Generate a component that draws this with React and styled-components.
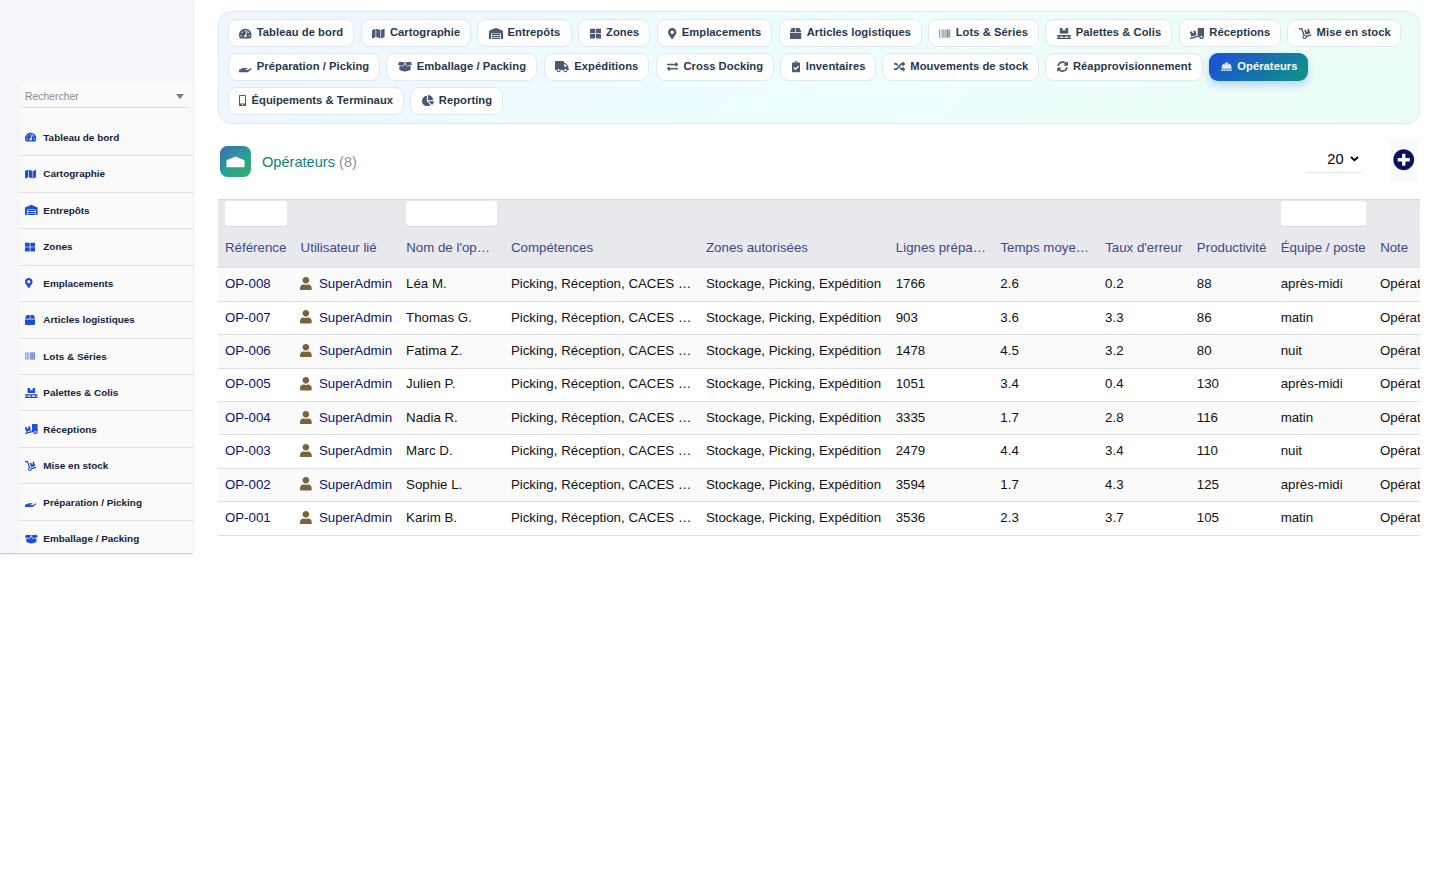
import React from 'react';
import styled, { createGlobalStyle, css } from 'styled-components';
import {
  FaTachometerAlt, FaMap, FaWarehouse, FaThLarge, FaMapMarkerAlt, FaBox, FaBarcode, FaPallet,
  FaTruckLoading, FaDolly, FaHandHolding, FaBoxOpen, FaTruck, FaExchangeAlt, FaClipboardCheck,
  FaRandom, FaSyncAlt, FaHardHat, FaMobileAlt, FaChartPie, FaUser, FaPlusCircle,
} from 'react-icons/fa';

const GlobalStyle = createGlobalStyle`
  * { box-sizing: border-box; }
  body {
    margin: 0;
    background: #fff;
    font-family: "Liberation Sans", Arial, sans-serif;
    overflow: hidden;
  }
`;

const Page = styled.div`
  display: flex;
  align-items: flex-start;
  width: 1445px;
  height: 894px;
`;

const Sidebar = styled.aside`
  width: 193px;
  height: 554px;
  flex: none;
  padding: 83px 0 0 20px;
  overflow: hidden;
  background: #f4f6fb;
  border-bottom: 1.5px solid #cfd0d4;
  box-shadow: 0 0 2px rgba(0, 0, 0, 0.2);
`;

const SideInner = styled.div`
  height: 480px;
  background: #fafafa;
`;

const SearchField = styled.div`
  display: flex;
  align-items: center;
  justify-content: space-between;
  width: 169px;
  height: 25px;
  padding: 2px 5px 0;
  border-bottom: 1px solid #d9d9d9;
  border-radius: 3px;
  color: #8a8a8a;
  font-size: 10.4px;
`;

const Caret = styled.span`
  border: 4px solid transparent;
  border-top: 5px solid #7d7d7d;
  border-bottom: 0;
`;

const SideList = styled.nav`
  padding-top: 11.7px;
`;

const SideItem = styled.a`
  display: flex;
  align-items: center;
  height: 36.48px;
  padding-left: 5px;
  border-bottom: 1px solid #dfdfe1;
  color: #14213b;
  font-size: 9.93px;
  font-weight: 700;
  white-space: nowrap;
`;

const IconBox = styled.span`
  display: flex;
  flex: none;

  svg {
    flex: none;
    width: ${(p) => p.$ratio}em;
    height: 1em;
  }
`;

const SideIcon = styled(IconBox)`
  width: 18.3px;
  color: #1d4ed8;
  font-size: 10.1px;
`;

const Content = styled.main`
  width: 1202px;
  margin-left: 25px;
  padding-top: 11px;
`;

const Tabs = styled.nav`
  display: flex;
  flex-wrap: wrap;
  align-content: flex-start;
  gap: 5.4px 6.3px;
  height: 113px;
  padding: 7px 8.5px 0;
  border: 1px solid #e2e8f0;
  border-radius: 13px;
  background: linear-gradient(135deg, #eff6ff 0%, #ecfeff 50%, #ecfdf5 100%);
`;

const Tab = styled.a`
  display: flex;
  align-items: center;
  width: ${(p) => p.$width}px;
  height: 28.4px;
  padding: 0 0 2px 10.6px;
  border: 1px solid #e2e8f0;
  border-radius: 9px;
  background: #fff;
  color: #27364d;
  font-size: 11.2px;
  font-weight: 700;
  letter-spacing: 0.005em;
  white-space: nowrap;
  ${(p) => p.$active && css`
    border-color: transparent;
    background: linear-gradient(135deg, #1d4ed8, #0f9385) border-box;
    color: #fff;
    box-shadow: 0 4px 9px rgba(29, 78, 216, 0.25);
  `}
`;

const TabIcon = styled(IconBox)`
  width: ${(p) => p.$width}px;
  padding-top: 2px;
  color: ${(p) => p.$color || '#4b5a70'};
  font-size: 11.2px;
`;

const TitleBar = styled.header`
  display: flex;
  align-items: center;
  height: 75px;
  padding: 0 2.5px 2px 2px;
`;

const AppBadge = styled.span`
  display: flex;
  align-items: center;
  justify-content: center;
  width: 31px;
  height: 31px;
  margin-top: 2px;
  border-radius: 7.5px;
  background: linear-gradient(145deg, #3b6cb7 0%, #2a9d96 50%, #3aae6c 100%);
`;

const Title = styled.h1`
  flex: 1;
  margin: 2px 0 0 11px;
  color: #0f8080;
  font-size: 14.6px;
  font-weight: 400;
`;

const Count = styled.span`
  color: #8f8f8f;
`;

const PageSize = styled.div`
  display: flex;
  align-items: center;
  justify-content: flex-end;
  gap: 6px;
  width: 56px;
  height: 27px;
  margin: -2px 28px 0 0;
  padding-right: 3px;
  border-bottom: 1.5px solid #e4e4e4;
  color: #000;
  font-size: 14.6px;
`;

const AddButton = styled.button`
  display: flex;
  align-items: center;
  justify-content: center;
  width: 28px;
  height: 43px;
  margin: -1px 0 0;
  padding: 0;
  border: 0;
  background: #fafafa;
  color: #0a1163;
  font-size: 21.5px;
`;

const Table = styled.section`
  overflow: hidden;
  border-top: 1px solid #d8d9dc;
  color: #111;
  font-size: 13.3px;
`;

const Row = styled.div`
  display: grid;
  grid-template-columns: 75.6px 105.6px 104.8px 195px 189.8px 104.7px 104.7px 91.7px 83.9px 99.4px 140px;
  align-items: center;
  height: 33.42px;
  border-bottom: 1px solid #dedfe1;
  background: ${(p) => (p.$striped ? '#fafafa' : '#fff')};
`;

const HeadRow = styled(Row)`
  height: 68.3px;
  align-items: stretch;
  background: #e8e9ed;
  color: #3f4889;
`;

const Cell = styled.div`
  min-width: 0;
  padding: 0 7.2px 1.8px 6.9px;
  overflow: hidden;
  white-space: nowrap;
  text-overflow: ellipsis;
  color: ${(p) => (p.$link ? '#0a1172' : 'inherit')};
`;

const UserCell = styled(Cell)`
  display: flex;
  align-items: center;
`;

const UserIcon = styled(IconBox)`
  width: 18.4px;
  color: #7b6238;
  font-size: 13.4px;
`;

const HeadCell = styled.div`
  display: flex;
  flex-direction: column;
  justify-content: space-between;
  min-width: 0;
  padding: 1px 7px 12.5px;
`;

const Filter = styled.div`
  height: 25px;
  border-radius: 3px;
  background: ${(p) => (p.$visible ? '#fff' : 'transparent')};
  box-shadow: ${(p) => (p.$visible ? '0 1px 0 #d9dade' : 'none')};
`;

const HeadLabel = styled.div`
  overflow: hidden;
  white-space: nowrap;
  text-overflow: ellipsis;
`;

// label, icon, icon width relative to its height
const sideItems = [
  ['Tableau de bord', FaTachometerAlt, 1.125],
  ['Cartographie', FaMap, 1.125],
  ['Entrepôts', FaWarehouse, 1.25],
  ['Zones', FaThLarge, 1],
  ['Emplacements', FaMapMarkerAlt, 0.75],
  ['Articles logistiques', FaBox, 1],
  ['Lots & Séries', FaBarcode, 1],
  ['Palettes & Colis', FaPallet, 1.25],
  ['Réceptions', FaTruckLoading, 1.25],
  ['Mise en stock', FaDolly, 1.125],
  ['Préparation / Picking', FaHandHolding, 1.125],
  ['Emballage / Packing', FaBoxOpen, 1.25],
];

// label, icon, tab width, icon column width, icon width relative to its height
const tabs = [
  ['Tableau de bord', FaTachometerAlt, 126.8, 17.7, 1.125],
  ['Cartographie', FaMap, 110.2, 17.7, 1.125],
  ['Entrepôts', FaWarehouse, 94.8, 18.8, 1.25],
  ['Zones', FaThLarge, 72.2, 16.3, 1],
  ['Emplacements', FaMapMarkerAlt, 115.8, 13.5, 0.75],
  ['Articles logistiques', FaBox, 142.8, 16.3, 1],
  ['Lots & Séries', FaBarcode, 111, 16.3, 1],
  ['Palettes & Colis', FaPallet, 127.3, 19, 1.25],
  ['Réceptions', FaTruckLoading, 102.3, 19, 1.25],
  ['Mise en stock', FaDolly, 114, 17.7, 1.125],
  ['Préparation / Picking', FaHandHolding, 152.6, 17.7, 1.125],
  ['Emballage / Packing', FaBoxOpen, 151, 18.8, 1.25],
  ['Expéditions', FaTruck, 105.6, 19, 1.25],
  ['Cross Docking', FaExchangeAlt, 118.3, 16.3, 1],
  ['Inventaires', FaClipboardCheck, 96, 14, 0.75],
  ['Mouvements de stock', FaRandom, 156.3, 16.3, 1],
  ['Réapprovisionnement', FaSyncAlt, 158, 16.3, 1],
  ['Opérateurs', FaHardHat, 99, 16.3, 1],
  ['Équipements & Terminaux', FaMobileAlt, 176.6, 12.4, 0.625],
  ['Reporting', FaChartPie, 93, 16.8, 1.0625],
];

const columns = [
  ['Référence', true], ['Utilisateur lié'], ["Nom de l'opérateur", true], ['Compétences'],
  ['Zones autorisées'], ['Lignes préparées'], ['Temps moyen/ligne'], ["Taux d'erreur"],
  ['Productivité'], ['Équipe / poste', true], ['Note'],
];

const operators = [
  ['OP-008', 'Léa M.', '1766', '2.6', '0.2', '88', 'après-midi'],
  ['OP-007', 'Thomas G.', '903', '3.6', '3.3', '86', 'matin'],
  ['OP-006', 'Fatima Z.', '1478', '4.5', '3.2', '80', 'nuit'],
  ['OP-005', 'Julien P.', '1051', '3.4', '0.4', '130', 'après-midi'],
  ['OP-004', 'Nadia R.', '3335', '1.7', '2.8', '116', 'matin'],
  ['OP-003', 'Marc D.', '2479', '4.4', '3.4', '110', 'nuit'],
  ['OP-002', 'Sophie L.', '3594', '1.7', '4.3', '125', 'après-midi'],
  ['OP-001', 'Karim B.', '3536', '2.3', '3.7', '105', 'matin'],
];

export default function App() {
  return (
    <Page>
      <GlobalStyle />
      <Sidebar>
        <SideInner>
          <SearchField>Rechercher<Caret /></SearchField>
          <SideList>
            {sideItems.map(([label, Icon, ratio]) => (
              <SideItem key={label}><SideIcon $ratio={ratio}><Icon /></SideIcon>{label}</SideItem>
            ))}
          </SideList>
        </SideInner>
      </Sidebar>
      <Content>
        <Tabs>
          {tabs.map(([label, Icon, width, iconWidth, ratio]) => {
            const active = label === 'Opérateurs';
            const color = active ? '#dfeaff' : label.startsWith('Équip') ? '#5d6420' : undefined;
            return (
              <Tab key={label} $width={width} $active={active}>
                <TabIcon $width={iconWidth} $ratio={ratio} $color={color}><Icon /></TabIcon>
                {label}
              </Tab>
            );
          })}
        </Tabs>
        <TitleBar>
          <AppBadge>
            <svg width="19" height="12" viewBox="0 0 19 12"><path d="M.5 11.3V4.2L9.5.4l9 3.8v7.1z" fill="#fff" /></svg>
          </AppBadge>
          <Title>Opérateurs <Count>(8)</Count></Title>
          <PageSize>
            20
            <svg width="9" height="6" viewBox="0 0 9 6"><path d="M1 1l3.5 3.3L8 1" fill="none" stroke="#000" strokeWidth="1.9" /></svg>
          </PageSize>
          <AddButton aria-label="Ajouter"><FaPlusCircle /></AddButton>
        </TitleBar>
        <Table>
          <HeadRow>
            {columns.map(([label, filter]) => (
              <HeadCell key={label}>
                <Filter $visible={filter} />
                <HeadLabel>{label}</HeadLabel>
              </HeadCell>
            ))}
          </HeadRow>
          {operators.map(([ref, name, lines, time, errors, productivity, shift], i) => (
            <Row key={ref} $striped={i % 2 === 0}>
              <Cell $link>{ref}</Cell>
              <UserCell $link><UserIcon $ratio={0.875}><FaUser /></UserIcon>SuperAdmin</UserCell>
              <Cell>{name}</Cell>
              <Cell>Picking, Réception, CACES 1, 3, 5</Cell>
              <Cell>Stockage, Picking, Expédition</Cell>
              <Cell>{lines}</Cell>
              <Cell>{time}</Cell>
              <Cell>{errors}</Cell>
              <Cell>{productivity}</Cell>
              <Cell>{shift}</Cell>
              <Cell>Opérateur</Cell>
            </Row>
          ))}
        </Table>
      </Content>
    </Page>
  );
}
